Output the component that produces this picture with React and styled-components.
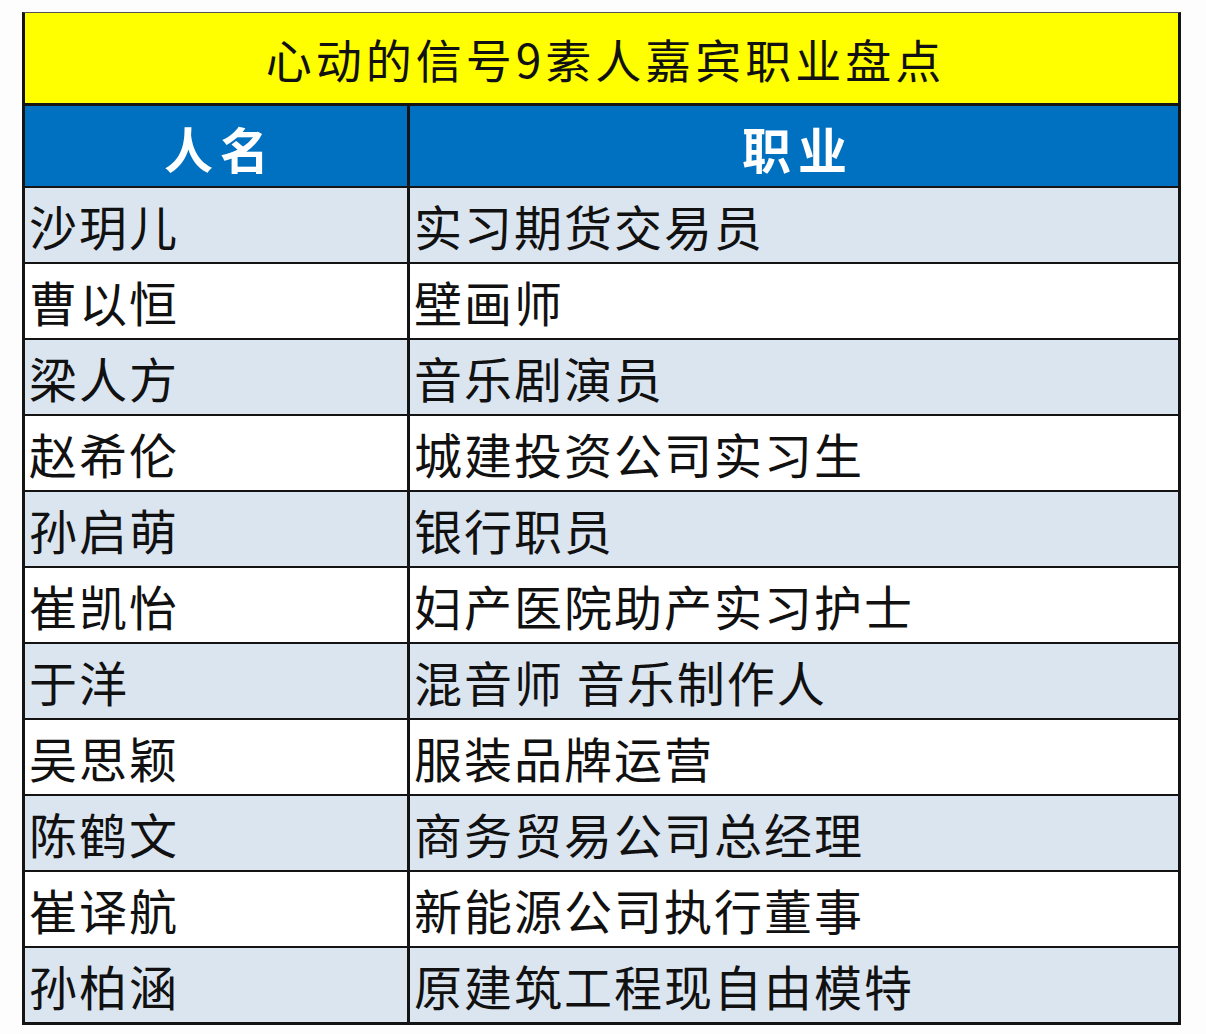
import React from 'react';
import styled, {createGlobalStyle} from 'styled-components';

const rows = [
  ['沙玥儿', '实习期货交易员'],
  ['曹以恒', '壁画师'],
  ['梁人方', '音乐剧演员'],
  ['赵希伦', '城建投资公司实习生'],
  ['孙启萌', '银行职员'],
  ['崔凯怡', '妇产医院助产实习护士'],
  ['于洋', '混音师 音乐制作人'],
  ['吴思颖', '服装品牌运营'],
  ['陈鹤文', '商务贸易公司总经理'],
  ['崔译航', '新能源公司执行董事'],
  ['孙柏涵', '原建筑工程现自由模特'],
];

const GlobalStyle = createGlobalStyle`
  * {
    box-sizing: border-box;
  }

  body {
    margin: 0;
    padding: 0;
    background: #fdfdfd;
    font-family: "Noto Sans CJK SC", "Noto Sans", sans-serif;
  }
`;

const Page = styled.div`
  width: 1206px;
  height: 1034px;
  padding: 12px 0 0 22px;
`;

const Table = styled.div`
  width: 1159px;
  border-top: 1px solid #555;
  border-left: 3px solid #141414;
  border-right: 3px solid #141414;
  border-bottom: 3px solid #141414;
`;

const Title = styled.div`
  height: 90px;
  background: #ffff00;
  display: flex;
  align-items: center;
  justify-content: center;
  font-size: 46px;
  color: #111;
  letter-spacing: 4px;
  padding-left: 8px;
`;

const Row = styled.div`
  display: grid;
  grid-template-columns: 385px 1fr;
  height: ${p => (p.$head ? 83 : 76)}px;
  border-top: ${p => (p.$head ? 3 : 2)}px solid #141414;
  background: ${p => (p.$head ? '#0070c0' : p.$shade ? '#dbe5f0' : '#ffffff')};
`;

const Cell = styled.div`
  display: flex;
  align-items: center;
  padding-left: 4px;
  font-size: 48px;
  line-height: 1;
  color: #111;
  letter-spacing: 2px;

  &:first-child {
    border-right: 3px solid #141414;
  }
`;

const HeadCell = styled(Cell)`
  justify-content: center;
  color: #fff;
  font-weight: 700;
  font-size: 49px;
  padding-left: 8px;
  letter-spacing: 7px;
  padding-top: 2px;
`;

export default function App() {
  return (
    <Page>
      <GlobalStyle />
      <Table>
        <Title>心动的信号9素人嘉宾职业盘点</Title>
        <Row $head>
          <HeadCell>人名</HeadCell>
          <HeadCell>职业</HeadCell>
        </Row>
        {rows.map(([name, job], i) => (
          <Row key={name} $shade={i % 2 === 0}>
            <Cell>{name}</Cell>
            <Cell>{job}</Cell>
          </Row>
        ))}
      </Table>
    </Page>
  );
}
